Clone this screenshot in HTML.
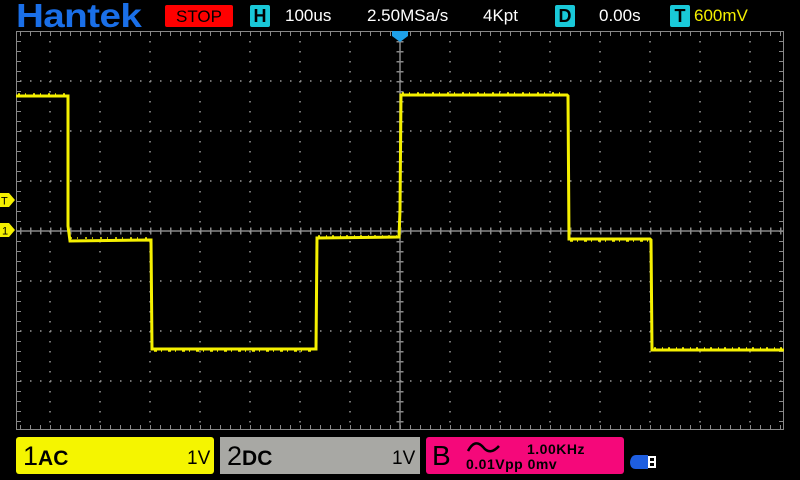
<!DOCTYPE html>
<html><head><meta charset="utf-8"><style>
body{margin:0;background:#000;width:800px;height:480px;overflow:hidden;position:relative;font-family:"Liberation Sans",sans-serif}
.a{position:absolute}
.hdr{color:#fff;font-size:17px;top:6px}
.box{background:#19c8d8;color:#000;font-weight:bold;font-size:18px;width:20px;height:22px;top:5px;text-align:center;line-height:22px;border-radius:2px}
</style></head><body>
<div class="a" style="left:16px;top:-3px;color:#1a6fe8;font-weight:bold;font-size:33px;letter-spacing:-0.5px;transform:scaleX(1.17);transform-origin:left">Hantek</div>
<div class="a" style="left:165px;top:5px;width:68px;height:22px;background:#f00;border-radius:2px;color:#000;font-size:17px;text-align:center;line-height:23px">STOP</div>
<div class="a box" style="left:250px">H</div>
<div class="a hdr" style="left:285px">100us</div>
<div class="a hdr" style="left:367px">2.50MSa/s</div>
<div class="a hdr" style="left:483px">4Kpt</div>
<div class="a box" style="left:555px">D</div>
<div class="a hdr" style="left:599px">0.00s</div>
<div class="a box" style="left:670px">T</div>
<div class="a hdr" style="left:694px;color:#f5f000">600mV</div>

<svg class="a" style="left:0;top:0" width="800" height="480">
<g stroke="#888" fill="none">
<rect x="16.5" y="31.5" width="767" height="398" stroke-width="1"/>
<line x1="400" y1="31" x2="400" y2="430" stroke-width="1.5"/>
<line x1="16" y1="231" x2="784" y2="231" stroke-width="1.5"/>
<line x1="20" y1="34" x2="784" y2="34" stroke-width="4" stroke-dasharray="1 9"/>
<line x1="20" y1="427" x2="784" y2="427" stroke-width="4" stroke-dasharray="1 9"/>
<line x1="19" y1="41" x2="19" y2="430" stroke-width="4" stroke-dasharray="1 9"/>
<line x1="781" y1="41" x2="781" y2="430" stroke-width="4" stroke-dasharray="1 9"/>
<line x1="20" y1="231" x2="784" y2="231" stroke-width="7" stroke-dasharray="1.5 8.5"/>
<line x1="400" y1="41" x2="400" y2="430" stroke-width="7" stroke-dasharray="1.5 8.5"/>
</g>
<g stroke="#999" stroke-width="1.5" stroke-dasharray="1.5 8.5">
<line x1="20" y1="81" x2="784" y2="81"/><line x1="20" y1="131" x2="784" y2="131"/><line x1="20" y1="181" x2="784" y2="181"/>
<line x1="20" y1="281" x2="784" y2="281"/><line x1="20" y1="331" x2="784" y2="331"/><line x1="20" y1="381" x2="784" y2="381"/>
<line x1="50" y1="41" x2="50" y2="430"/><line x1="100" y1="41" x2="100" y2="430"/><line x1="150" y1="41" x2="150" y2="430"/><line x1="200" y1="41" x2="200" y2="430"/><line x1="250" y1="41" x2="250" y2="430"/><line x1="300" y1="41" x2="300" y2="430"/><line x1="350" y1="41" x2="350" y2="430"/>
<line x1="450" y1="41" x2="450" y2="430"/><line x1="500" y1="41" x2="500" y2="430"/><line x1="550" y1="41" x2="550" y2="430"/><line x1="600" y1="41" x2="600" y2="430"/><line x1="650" y1="41" x2="650" y2="430"/><line x1="700" y1="41" x2="700" y2="430"/><line x1="750" y1="41" x2="750" y2="430"/>
</g>
<path d="M392 31 H408 V36 L400 42 L392 36 Z" fill="#1ea0e8"/>
<g stroke="#f5f000" fill="none">
<polyline stroke-width="3" points="16,96 67,96 68,96 68,226 70,241 150,240 151,240 152,349 316,349 317,238 399,237 400,210 401,95 567,95 568,96 569,239 650,239 651,240 652,350 784,350"/>
<polyline stroke-width="1.5" stroke-dasharray="2 5 1 7" points="18,94 66,94"/>
<polyline stroke-width="1.5" stroke-dasharray="2 5 1 7" points="70,238 150,238"/>
<polyline stroke-width="1.5" stroke-dasharray="3 4 1 6" points="154,351 315,351"/>
<polyline stroke-width="1.5" stroke-dasharray="2 6 1 5" points="318,236 398,236"/>
<polyline stroke-width="1.5" stroke-dasharray="2 5 1 7" points="402,93 566,93"/>
<polyline stroke-width="1.5" stroke-dasharray="3 4 1 6" points="570,241 649,241"/>
<polyline stroke-width="1.5" stroke-dasharray="2 6 1 5" points="654,348 783,348"/>
</g>
<path d="M0 193 H9 L15 200 L9 207 H0 Z" fill="#f5f000"/>
<text x="1" y="204.5" font-size="11" font-family="Liberation Sans" fill="#000">T</text>
<path d="M0 223 H9 L15 230 L9 237 H0 Z" fill="#f5f000"/>
<text x="2" y="234.5" font-size="11" font-family="Liberation Sans" fill="#000">1</text>
<path d="M636 455 H648 V469 H636 Q630 469 630 462 Q631 455 636 455 Z" fill="#1e5ee0"/>
<rect x="648" y="456" width="8" height="12" fill="#fff"/>
<rect x="650" y="458" width="4" height="3" fill="#000"/><rect x="650" y="463" width="4" height="3" fill="#000"/>
</svg>

<div class="a" style="left:16px;top:437px;width:198px;height:37px;background:#f5f500;border-radius:3px"></div>
<div class="a" style="left:23px;top:441px;font-size:27px;color:#000">1<span style="font-size:21px;font-weight:bold">AC</span></div>
<div class="a" style="left:187px;top:448px;font-size:19px;color:#000">1V</div>
<div class="a" style="left:220px;top:437px;width:200px;height:37px;background:#a8a8a4"></div>
<div class="a" style="left:227px;top:441px;font-size:27px;color:#000">2<span style="font-size:21px;font-weight:bold">DC</span></div>
<div class="a" style="left:392px;top:448px;font-size:19px;color:#000">1V</div>
<div class="a" style="left:426px;top:437px;width:198px;height:37px;background:#f5087a;border-radius:3px"></div>
<div class="a" style="left:432px;top:440px;font-size:28px;color:#000">B</div>
<svg class="a" style="left:466px;top:440px" width="40" height="16"><path d="M2 11 Q9 -2 17 7 Q24 16 33 6" stroke="#000" stroke-width="2.5" fill="none"/></svg>
<div class="a" style="left:527px;top:441px;font-size:14px;font-weight:bold;color:#000;letter-spacing:0.5px">1.00KHz</div>
<div class="a" style="left:466px;top:456px;font-size:14px;font-weight:bold;color:#000;letter-spacing:0.5px">0.01Vpp 0mv</div>
</body></html>
